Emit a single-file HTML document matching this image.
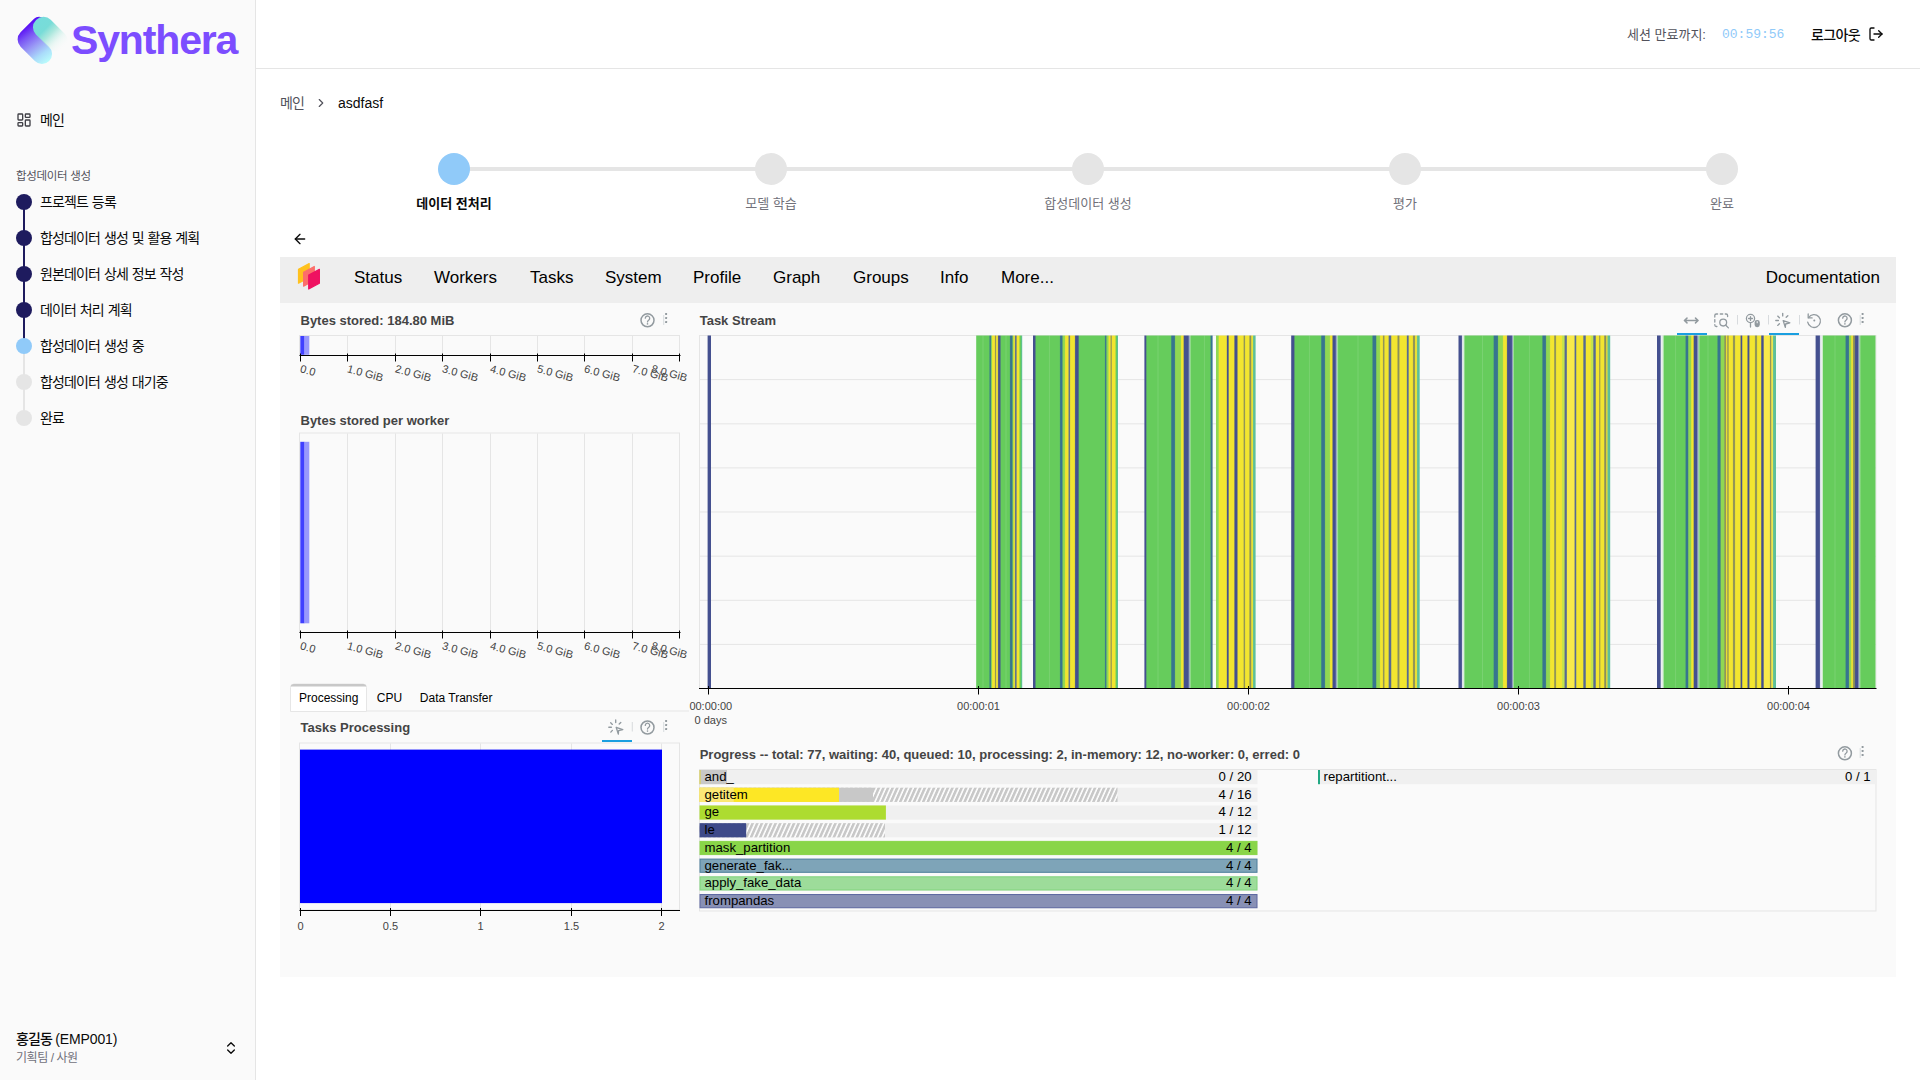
<!DOCTYPE html>
<html lang="ko"><head><meta charset="utf-8"><title>Synthera</title>
<style>
*{box-sizing:border-box;margin:0;padding:0}
html,body{width:1920px;height:1080px;overflow:hidden;background:#fff}
body{font-family:"Liberation Sans","Noto Sans CJK KR",sans-serif;color:#0a0a0a;position:relative}
.abs{position:absolute}
.t{position:absolute;white-space:nowrap;line-height:1}
.kr{font-family:"Liberation Sans","Noto Sans CJK KR",sans-serif}
#side{position:absolute;left:0;top:0;width:256px;height:1080px;background:#fafafa;border-right:1px solid #e5e5e5}
#head{position:absolute;left:256px;top:0;width:1664px;height:69px;border-bottom:1px solid #e5e5e5;background:#fff}
#panel{position:absolute;left:280px;top:257px;width:1616px;height:720px;background:#fafafa}
#nav{position:absolute;left:0;top:0;width:1616px;height:46px;background:#eee}
#nav .t{font-size:17px;color:#000;top:11px}
.bt{position:absolute;white-space:nowrap;line-height:1;font-weight:bold;font-size:13px;color:#444}
.ax{position:absolute;white-space:nowrap;line-height:1;font-size:11px;color:#444}
svg{position:absolute;overflow:visible}
</style></head><body>

<div id="side">
<svg style="left:14px;top:12px" width="56" height="56" viewBox="0 0 56 56">
<defs>
<linearGradient id="lg1" gradientUnits="userSpaceOnUse" x1="-20" y1="0" x2="20" y2="6"><stop offset="0" stop-color="#5a10f5"/><stop offset="0.22" stop-color="#7a55f4"/><stop offset="0.5" stop-color="#9a9af6"/><stop offset="0.78" stop-color="#aadcfa"/><stop offset="1" stop-color="#b8f9fb"/></linearGradient>
<linearGradient id="lg2" gradientUnits="userSpaceOnUse" x1="-18" y1="0" x2="22" y2="0"><stop offset="0" stop-color="#76dcdc"/><stop offset="0.32" stop-color="#78dcd8"/><stop offset="0.5" stop-color="#9ee4d8" stop-opacity="0.85"/><stop offset="0.75" stop-color="#dff5f0" stop-opacity="0.5"/><stop offset="1" stop-color="#fafafa" stop-opacity="0"/></linearGradient>
</defs>
<g transform="translate(28 27.5) rotate(45)">
<path d="M-20.2 10.1 V-9 a7 7 0 0 1 7 -7 H-8 V0 H10.1 a10.1 10.1 0 0 1 0 20.2 H-10.1 a10.1 10.1 0 0 1 -10.1 -10.1 Z" fill="url(#lg1)"/>
<rect x="-18" y="-20.2" width="40.4" height="20.9" rx="10.1" fill="url(#lg2)"/>
</g>
</svg>
<div class="t" style="left:71px;top:20px;font-size:41px;font-weight:bold;color:#7c4dff;letter-spacing:-1.15px;font-family:'Liberation Sans',sans-serif">Synthera</div>
<svg style="left:16px;top:112px" width="16" height="16" viewBox="0 0 24 24" fill="none" stroke="#3f3f46" stroke-width="2" stroke-linecap="round" stroke-linejoin="round"><rect x="3" y="3" width="7" height="9" rx="1"/><rect x="14" y="3" width="7" height="5" rx="1"/><rect x="14" y="12" width="7" height="9" rx="1"/><rect x="3" y="16" width="7" height="5" rx="1"/></svg>
<div class="t kr" style="left:40px;top:111px;font-size:14px;line-height:18px;font-weight:400;letter-spacing:-0.85px;color:#0a0a0a">메인</div>
<div class="t kr" style="left:16px;top:168px;font-size:11.5px;line-height:16px;letter-spacing:-0.3px;color:#52525b">합성데이터 생성</div>
<div class="abs" style="left:23px;top:202px;width:2px;height:36px;background:#1e1b5e"></div>
<div class="abs" style="left:23px;top:238px;width:2px;height:36px;background:#1e1b5e"></div>
<div class="abs" style="left:23px;top:274px;width:2px;height:36px;background:#1e1b5e"></div>
<div class="abs" style="left:23px;top:310px;width:2px;height:36px;background:#1e1b5e"></div>
<div class="abs" style="left:23px;top:346px;width:2px;height:36px;background:#e5e5e5"></div>
<div class="abs" style="left:23px;top:382px;width:2px;height:36px;background:#e5e5e5"></div>
<div class="abs" style="left:16px;top:194px;width:16px;height:16px;border-radius:50%;background:#1e1b5e"></div>
<div class="t kr" style="left:40px;top:192px;font-size:14px;line-height:20px;font-weight:400;letter-spacing:-0.85px;word-spacing:0.7px;color:#0a0a0a">프로젝트 등록</div>
<div class="abs" style="left:16px;top:230px;width:16px;height:16px;border-radius:50%;background:#1e1b5e"></div>
<div class="t kr" style="left:40px;top:228px;font-size:14px;line-height:20px;font-weight:400;letter-spacing:-0.85px;word-spacing:0.7px;color:#0a0a0a">합성데이터 생성 및 활용 계획</div>
<div class="abs" style="left:16px;top:266px;width:16px;height:16px;border-radius:50%;background:#1e1b5e"></div>
<div class="t kr" style="left:40px;top:264px;font-size:14px;line-height:20px;font-weight:400;letter-spacing:-0.85px;word-spacing:0.7px;color:#0a0a0a">원본데이터 상세 정보 작성</div>
<div class="abs" style="left:16px;top:302px;width:16px;height:16px;border-radius:50%;background:#1e1b5e"></div>
<div class="t kr" style="left:40px;top:300px;font-size:14px;line-height:20px;font-weight:400;letter-spacing:-0.85px;word-spacing:0.7px;color:#0a0a0a">데이터 처리 계획</div>
<div class="abs" style="left:16px;top:338px;width:16px;height:16px;border-radius:50%;background:#90caf9"></div>
<div class="t kr" style="left:40px;top:336px;font-size:14px;line-height:20px;font-weight:400;letter-spacing:-0.85px;word-spacing:0.7px;color:#0a0a0a">합성데이터 생성 중</div>
<div class="abs" style="left:16px;top:374px;width:16px;height:16px;border-radius:50%;background:#e5e5e5"></div>
<div class="t kr" style="left:40px;top:372px;font-size:14px;line-height:20px;font-weight:400;letter-spacing:-0.85px;word-spacing:0.7px;color:#0a0a0a">합성데이터 생성 대기중</div>
<div class="abs" style="left:16px;top:410px;width:16px;height:16px;border-radius:50%;background:#e5e5e5"></div>
<div class="t kr" style="left:40px;top:408px;font-size:14px;line-height:20px;font-weight:400;letter-spacing:-0.85px;word-spacing:0.7px;color:#0a0a0a">완료</div>
<div class="t kr" style="left:16px;top:1029px;font-size:14px;line-height:20px;font-weight:500;color:#0a0a0a"><span style="letter-spacing:-0.85px">홍길동 </span><span style="letter-spacing:-0.1px">(EMP001)</span></div>
<div class="t kr" style="left:16px;top:1050px;font-size:12px;line-height:16px;letter-spacing:-0.45px;color:#71717a">기획팀 / 사원</div>
<svg style="left:223px;top:1040px" width="16" height="16" viewBox="0 0 24 24" fill="none" stroke="#0a0a0a" stroke-width="2" stroke-linecap="round" stroke-linejoin="round"><path d="m7 15 5 5 5-5"/><path d="m7 9 5-5 5 5"/></svg>
</div>
<div id="head">
<div class="t kr" style="left:1371px;top:25px;font-size:13px;line-height:20px;color:#52525b">세션 만료까지:</div>
<div class="t" style="left:1466px;top:25px;font-size:13px;line-height:20px;color:#90caf9;font-family:'Liberation Mono','DejaVu Sans Mono',monospace">00:59:56</div>
<div class="t kr" style="left:1555px;top:25px;font-size:14px;line-height:20px;color:#0a0a0a;font-weight:500;letter-spacing:-0.6px">로그아웃</div>
<svg style="left:1612px;top:26px" width="16" height="16" viewBox="0 0 24 24" fill="none" stroke="#0a0a0a" stroke-width="2" stroke-linecap="round" stroke-linejoin="round"><path d="M9 21H5a2 2 0 0 1-2-2V5a2 2 0 0 1 2-2h4"/><polyline points="16 17 21 12 16 7"/><line x1="21" x2="9" y1="12" y2="12"/></svg>
</div>
<div class="t kr" style="left:280px;top:93px;font-size:14px;line-height:20px;letter-spacing:-0.85px;color:#52525b">메인</div>
<svg style="left:314px;top:96px" width="14" height="14" viewBox="0 0 24 24" fill="none" stroke="#52525b" stroke-width="2" stroke-linecap="round" stroke-linejoin="round"><path d="m9 18 6-6-6-6"/></svg>
<div class="t" style="left:338px;top:93px;font-size:14px;line-height:20px;color:#0a0a0a">asdfasf</div>
<div class="abs" style="left:454px;top:167px;width:1268px;height:4px;background:#e5e5e5"></div>
<div class="abs" style="left:438px;top:153px;width:32px;height:32px;border-radius:50%;background:#90caf9"></div>
<div class="t kr" style="left:354px;width:200px;text-align:center;top:194px;font-size:13px;line-height:20px;font-weight:bold;color:#0a0a0a">데이터 전처리</div>
<div class="abs" style="left:755px;top:153px;width:32px;height:32px;border-radius:50%;background:#e5e5e5"></div>
<div class="t kr" style="left:671px;width:200px;text-align:center;top:194px;font-size:13px;line-height:20px;color:#71717a">모델 학습</div>
<div class="abs" style="left:1072px;top:153px;width:32px;height:32px;border-radius:50%;background:#e5e5e5"></div>
<div class="t kr" style="left:988px;width:200px;text-align:center;top:194px;font-size:13px;line-height:20px;color:#71717a">합성데이터 생성</div>
<div class="abs" style="left:1389px;top:153px;width:32px;height:32px;border-radius:50%;background:#e5e5e5"></div>
<div class="t kr" style="left:1305px;width:200px;text-align:center;top:194px;font-size:13px;line-height:20px;color:#71717a">평가</div>
<div class="abs" style="left:1706px;top:153px;width:32px;height:32px;border-radius:50%;background:#e5e5e5"></div>
<div class="t kr" style="left:1622px;width:200px;text-align:center;top:194px;font-size:13px;line-height:20px;color:#71717a">완료</div>
<svg style="left:292px;top:231px" width="16" height="16" viewBox="0 0 24 24" fill="none" stroke="#0a0a0a" stroke-width="2" stroke-linecap="round" stroke-linejoin="round"><path d="m12 19-7-7 7-7"/><path d="M19 12H5"/></svg>
<div id="panel">
<div id="nav">
<svg style="left:0;top:0" width="60" height="46" viewBox="280 257 60 46">
<g stroke-width="1.2" stroke-linejoin="round">
<path d="M298.5 269.3 L309.2 263.6 V277.4 L298.5 283.2 Z" fill="#ffc11e" stroke="#ffc11e"/>
<path d="M303.6 272.2 L314.3 266.5 V280.3 L303.6 286.1 Z" fill="#fc6e6b" stroke="#fc6e6b"/>
<path d="M308.7 275.1 L319.4 269.4 V283.2 L308.7 289 Z" fill="#ef1161" stroke="#ef1161"/>
</g></svg>
<div class="t" style="left:74px;line-height:20px">Status</div>
<div class="t" style="left:154px;line-height:20px">Workers</div>
<div class="t" style="left:250px;line-height:20px">Tasks</div>
<div class="t" style="left:325px;line-height:20px">System</div>
<div class="t" style="left:413px;line-height:20px">Profile</div>
<div class="t" style="left:493px;line-height:20px">Graph</div>
<div class="t" style="left:573px;line-height:20px">Groups</div>
<div class="t" style="left:660px;line-height:20px">Info</div>
<div class="t" style="left:721px;line-height:20px">More...</div>
<div class="t" style="right:16px;line-height:20px">Documentation</div>
</div>
<svg style="left:-280px;top:-257px" width="1920" height="1080" viewBox="0 0 1920 1080" font-family="Liberation Sans, sans-serif">
<text x="300.5" y="324.6" font-size="13" font-weight="bold" fill="#444">Bytes stored: 184.80 MiB</text>
<g fill="none" stroke="#929a9f" stroke-width="1.5" stroke-linecap="round"><circle cx="647.5" cy="320.3" r="6.5"/><path stroke-width="1.3" d="M645.3 318.2 a2.2 2.2 0 1 1 3.5 1.8 c-0.9 0.6 -1.3 0.9 -1.3 1.9"/></g><circle cx="647.5" cy="323.90000000000003" r="0.8" fill="#929a9f"/>
<line x1="663.6999999999999" y1="315" x2="663.6999999999999" y2="325" stroke="#c9ced3" stroke-width="0.7"/>
<rect x="665.0999999999999" y="312.9" width="2" height="2" rx="0.4" fill="#929a9f"/>
<rect x="665.0999999999999" y="317.0" width="2" height="2" rx="0.4" fill="#929a9f"/>
<rect x="665.0999999999999" y="321.1" width="2" height="2" rx="0.4" fill="#929a9f"/>
<rect x="299.5" y="335.5" width="380" height="20.0" fill="#fafafa" stroke="#e5e5e5" stroke-width="1"/>
<line x1="347.5" y1="336" x2="347.5" y2="355.5" stroke="#e5e5e5" stroke-width="1"/>
<line x1="395.5" y1="336" x2="395.5" y2="355.5" stroke="#e5e5e5" stroke-width="1"/>
<line x1="442.5" y1="336" x2="442.5" y2="355.5" stroke="#e5e5e5" stroke-width="1"/>
<line x1="490.5" y1="336" x2="490.5" y2="355.5" stroke="#e5e5e5" stroke-width="1"/>
<line x1="537.5" y1="336" x2="537.5" y2="355.5" stroke="#e5e5e5" stroke-width="1"/>
<line x1="584.5" y1="336" x2="584.5" y2="355.5" stroke="#e5e5e5" stroke-width="1"/>
<line x1="632.5" y1="336" x2="632.5" y2="355.5" stroke="#e5e5e5" stroke-width="1"/>
<rect x="300.3" y="336" width="4.3" height="18.80000000000001" fill="#4040ff"/>
<rect x="304.6" y="336" width="4.7" height="18.80000000000001" fill="#9898fc"/>
<line x1="299.5" y1="355.5" x2="680.5" y2="355.5" stroke="#000" stroke-width="1"/>
<line x1="300.5" y1="353.5" x2="300.5" y2="361.5" stroke="#000" stroke-width="1"/>
<line x1="347.5" y1="353.5" x2="347.5" y2="361.5" stroke="#000" stroke-width="1"/>
<line x1="395.5" y1="353.5" x2="395.5" y2="361.5" stroke="#000" stroke-width="1"/>
<line x1="442.5" y1="353.5" x2="442.5" y2="361.5" stroke="#000" stroke-width="1"/>
<line x1="490.5" y1="353.5" x2="490.5" y2="361.5" stroke="#000" stroke-width="1"/>
<line x1="537.5" y1="353.5" x2="537.5" y2="361.5" stroke="#000" stroke-width="1"/>
<line x1="584.5" y1="353.5" x2="584.5" y2="361.5" stroke="#000" stroke-width="1"/>
<line x1="632.5" y1="353.5" x2="632.5" y2="361.5" stroke="#000" stroke-width="1"/>
<line x1="679.5" y1="353.5" x2="679.5" y2="361.5" stroke="#000" stroke-width="1"/>
<text font-size="11" fill="#444" transform="translate(301.8 363.8) rotate(15)" y="8.6">0.0</text>
<text font-size="11" fill="#444" transform="translate(348.8 363.8) rotate(15)" y="8.6">1.0 GiB</text>
<text font-size="11" fill="#444" transform="translate(396.8 363.8) rotate(15)" y="8.6">2.0 GiB</text>
<text font-size="11" fill="#444" transform="translate(443.8 363.8) rotate(15)" y="8.6">3.0 GiB</text>
<text font-size="11" fill="#444" transform="translate(491.8 363.8) rotate(15)" y="8.6">4.0 GiB</text>
<text font-size="11" fill="#444" transform="translate(538.8 363.8) rotate(15)" y="8.6">5.0 GiB</text>
<text font-size="11" fill="#444" transform="translate(585.8 363.8) rotate(15)" y="8.6">6.0 GiB</text>
<text font-size="11" fill="#444" transform="translate(633.8 363.8) rotate(15)" y="8.6">7.0 GiB</text>
<text font-size="11" fill="#444" transform="translate(653.0 363.8) rotate(15)" y="8.6">8.0 GiB</text>
<text x="300.5" y="424.6" font-size="13" font-weight="bold" fill="#444">Bytes stored per worker</text>
<rect x="299.5" y="433.0" width="380" height="199.5" fill="#fafafa" stroke="#e5e5e5" stroke-width="1"/>
<line x1="347.5" y1="433.5" x2="347.5" y2="632.5" stroke="#e5e5e5" stroke-width="1"/>
<line x1="395.5" y1="433.5" x2="395.5" y2="632.5" stroke="#e5e5e5" stroke-width="1"/>
<line x1="442.5" y1="433.5" x2="442.5" y2="632.5" stroke="#e5e5e5" stroke-width="1"/>
<line x1="490.5" y1="433.5" x2="490.5" y2="632.5" stroke="#e5e5e5" stroke-width="1"/>
<line x1="537.5" y1="433.5" x2="537.5" y2="632.5" stroke="#e5e5e5" stroke-width="1"/>
<line x1="584.5" y1="433.5" x2="584.5" y2="632.5" stroke="#e5e5e5" stroke-width="1"/>
<line x1="632.5" y1="433.5" x2="632.5" y2="632.5" stroke="#e5e5e5" stroke-width="1"/>
<rect x="300.3" y="441.8" width="4.3" height="181.49999999999994" fill="#4040ff"/>
<rect x="304.6" y="441.8" width="4.7" height="181.49999999999994" fill="#9898fc"/>
<line x1="299.5" y1="632.5" x2="680.5" y2="632.5" stroke="#000" stroke-width="1"/>
<line x1="300.5" y1="630.5" x2="300.5" y2="638.5" stroke="#000" stroke-width="1"/>
<line x1="347.5" y1="630.5" x2="347.5" y2="638.5" stroke="#000" stroke-width="1"/>
<line x1="395.5" y1="630.5" x2="395.5" y2="638.5" stroke="#000" stroke-width="1"/>
<line x1="442.5" y1="630.5" x2="442.5" y2="638.5" stroke="#000" stroke-width="1"/>
<line x1="490.5" y1="630.5" x2="490.5" y2="638.5" stroke="#000" stroke-width="1"/>
<line x1="537.5" y1="630.5" x2="537.5" y2="638.5" stroke="#000" stroke-width="1"/>
<line x1="584.5" y1="630.5" x2="584.5" y2="638.5" stroke="#000" stroke-width="1"/>
<line x1="632.5" y1="630.5" x2="632.5" y2="638.5" stroke="#000" stroke-width="1"/>
<line x1="679.5" y1="630.5" x2="679.5" y2="638.5" stroke="#000" stroke-width="1"/>
<text font-size="11" fill="#444" transform="translate(301.8 640.8) rotate(15)" y="8.6">0.0</text>
<text font-size="11" fill="#444" transform="translate(348.8 640.8) rotate(15)" y="8.6">1.0 GiB</text>
<text font-size="11" fill="#444" transform="translate(396.8 640.8) rotate(15)" y="8.6">2.0 GiB</text>
<text font-size="11" fill="#444" transform="translate(443.8 640.8) rotate(15)" y="8.6">3.0 GiB</text>
<text font-size="11" fill="#444" transform="translate(491.8 640.8) rotate(15)" y="8.6">4.0 GiB</text>
<text font-size="11" fill="#444" transform="translate(538.8 640.8) rotate(15)" y="8.6">5.0 GiB</text>
<text font-size="11" fill="#444" transform="translate(585.8 640.8) rotate(15)" y="8.6">6.0 GiB</text>
<text font-size="11" fill="#444" transform="translate(633.8 640.8) rotate(15)" y="8.6">7.0 GiB</text>
<text font-size="11" fill="#444" transform="translate(653.0 640.8) rotate(15)" y="8.6">8.0 GiB</text>
<line x1="290" y1="711" x2="689" y2="711" stroke="#e6e6e6" stroke-width="1"/>
<path d="M290.5 711.5 V687.5 a3.5 3.5 0 0 1 3.5 -3.5 H363 a3.5 3.5 0 0 1 3.5 3.5 V711.5 Z" fill="#fff" stroke="#e6e6e6" stroke-width="1"/>
<path d="M290.6 686.6 a3 3 0 0 1 3 -2.6 H363.4 a3 3 0 0 1 3 2.6 Z" fill="#c8c8c8"/>
<text x="299" y="702" font-size="12" fill="#000">Processing</text>
<text x="376.8" y="702" font-size="12" fill="#000">CPU</text>
<text x="419.8" y="702" font-size="12" fill="#000">Data Transfer</text>
<text x="300.5" y="731.9" font-size="13" font-weight="bold" fill="#444">Tasks Processing</text>
<g fill="none" stroke="#929a9f" stroke-width="1.35" stroke-linecap="round" stroke-linejoin="round"><path d="M616.2 727.3 l6.6 2.3 l-4.2 1.1 l-0.3 3.4 z"/><path d="M615.7 722.6 v-2.6 M612.4 724.4 l-1.7 -1.6 M619.2 724 l1.6 -1.6 M611.4 727.2 h-2.6 M612.4 730.4 l-1.6 1.7"/></g>
<rect x="602" y="740" width="30" height="2" fill="#1a9fe0"/>
<line x1="632.3" y1="722.0" x2="632.3" y2="731.5" stroke="#cfd3d7" stroke-width="0.8"/>
<g fill="none" stroke="#929a9f" stroke-width="1.5" stroke-linecap="round"><circle cx="647.5" cy="727.5" r="6.5"/><path stroke-width="1.3" d="M645.3 725.4 a2.2 2.2 0 1 1 3.5 1.8 c-0.9 0.6 -1.3 0.9 -1.3 1.9"/></g><circle cx="647.5" cy="731.1" r="0.8" fill="#929a9f"/>
<line x1="663.6999999999999" y1="722" x2="663.6999999999999" y2="732" stroke="#c9ced3" stroke-width="0.7"/>
<rect x="665.0999999999999" y="719.9" width="2" height="2" rx="0.4" fill="#929a9f"/>
<rect x="665.0999999999999" y="724.0" width="2" height="2" rx="0.4" fill="#929a9f"/>
<rect x="665.0999999999999" y="728.1" width="2" height="2" rx="0.4" fill="#929a9f"/>
<rect x="299.5" y="743" width="380" height="167" fill="#fafafa" stroke="#e5e5e5" stroke-width="1"/>
<line x1="390.5" y1="743.5" x2="390.5" y2="910" stroke="#e5e5e5" stroke-width="1"/>
<line x1="480.5" y1="743.5" x2="480.5" y2="910" stroke="#e5e5e5" stroke-width="1"/>
<line x1="571.5" y1="743.5" x2="571.5" y2="910" stroke="#e5e5e5" stroke-width="1"/>
<line x1="661.5" y1="743.5" x2="661.5" y2="910" stroke="#e5e5e5" stroke-width="1"/>
<rect x="300" y="749.6" width="362" height="153.5" fill="#0000ff"/>
<line x1="299.5" y1="910.5" x2="680" y2="910.5" stroke="#000" stroke-width="1"/>
<line x1="300.5" y1="908" x2="300.5" y2="916" stroke="#000" stroke-width="1"/>
<text x="300.5" y="930" font-size="11" fill="#444" text-anchor="middle">0</text>
<line x1="390.5" y1="908" x2="390.5" y2="916" stroke="#000" stroke-width="1"/>
<text x="390.5" y="930" font-size="11" fill="#444" text-anchor="middle">0.5</text>
<line x1="480.5" y1="908" x2="480.5" y2="916" stroke="#000" stroke-width="1"/>
<text x="480.5" y="930" font-size="11" fill="#444" text-anchor="middle">1</text>
<line x1="571.5" y1="908" x2="571.5" y2="916" stroke="#000" stroke-width="1"/>
<text x="571.5" y="930" font-size="11" fill="#444" text-anchor="middle">1.5</text>
<line x1="661.5" y1="908" x2="661.5" y2="916" stroke="#000" stroke-width="1"/>
<text x="661.5" y="930" font-size="11" fill="#444" text-anchor="middle">2</text>
<text x="699.7" y="324.6" font-size="13" font-weight="bold" fill="#444">Task Stream</text>
<rect x="699.5" y="335.5" width="1176.5" height="353" fill="#fafafa" stroke="#e5e5e5" stroke-width="1"/>
<line x1="700" y1="379.6" x2="1876" y2="379.6" stroke="#e5e5e5" stroke-width="1"/>
<line x1="700" y1="423.8" x2="1876" y2="423.8" stroke="#e5e5e5" stroke-width="1"/>
<line x1="700" y1="467.9" x2="1876" y2="467.9" stroke="#e5e5e5" stroke-width="1"/>
<line x1="700" y1="512.0" x2="1876" y2="512.0" stroke="#e5e5e5" stroke-width="1"/>
<line x1="700" y1="556.2" x2="1876" y2="556.2" stroke="#e5e5e5" stroke-width="1"/>
<line x1="700" y1="600.3" x2="1876" y2="600.3" stroke="#e5e5e5" stroke-width="1"/>
<line x1="700" y1="644.4" x2="1876" y2="644.4" stroke="#e5e5e5" stroke-width="1"/>
<defs><linearGradient id="tsg" gradientUnits="userSpaceOnUse" x1="700.0" y1="0" x2="1880.0" y2="0"><stop offset="0.00602" stop-color="#44508f"/><stop offset="0.00975" stop-color="#44508f"/><stop offset="0.23364" stop-color="#66cc5c"/><stop offset="0.24483" stop-color="#66cc5c"/><stop offset="0.24585" stop-color="#37758f"/><stop offset="0.24610" stop-color="#37758f"/><stop offset="0.24712" stop-color="#90d752"/><stop offset="0.24695" stop-color="#90d752"/><stop offset="0.24797" stop-color="#f2e530"/><stop offset="0.24949" stop-color="#f2e530"/><stop offset="0.25051" stop-color="#8a8f5a"/><stop offset="0.25034" stop-color="#8a8f5a"/><stop offset="0.25136" stop-color="#f2e530"/><stop offset="0.25203" stop-color="#f2e530"/><stop offset="0.25305" stop-color="#44508f"/><stop offset="0.25415" stop-color="#44508f"/><stop offset="0.25517" stop-color="#66cc5c"/><stop offset="0.26220" stop-color="#66cc5c"/><stop offset="0.26322" stop-color="#37758f"/><stop offset="0.26432" stop-color="#37758f"/><stop offset="0.26534" stop-color="#90d752"/><stop offset="0.26500" stop-color="#90d752"/><stop offset="0.26602" stop-color="#f2e530"/><stop offset="0.26644" stop-color="#f2e530"/><stop offset="0.26746" stop-color="#566a94"/><stop offset="0.26780" stop-color="#566a94"/><stop offset="0.26881" stop-color="#f2e530"/><stop offset="0.27025" stop-color="#f2e530"/><stop offset="0.27127" stop-color="#66cc5c"/><stop offset="0.27169" stop-color="#66cc5c"/><stop offset="0.27271" stop-color="#5cbf9a"/><stop offset="0.27347" stop-color="#5cbf9a"/><stop offset="0.28178" stop-color="#44508f"/><stop offset="0.28381" stop-color="#44508f"/><stop offset="0.28483" stop-color="#66cc5c"/><stop offset="0.30458" stop-color="#66cc5c"/><stop offset="0.30559" stop-color="#37758f"/><stop offset="0.30669" stop-color="#37758f"/><stop offset="0.30771" stop-color="#90d752"/><stop offset="0.30881" stop-color="#90d752"/><stop offset="0.30983" stop-color="#f2e530"/><stop offset="0.31186" stop-color="#f2e530"/><stop offset="0.31288" stop-color="#566a94"/><stop offset="0.31305" stop-color="#566a94"/><stop offset="0.31407" stop-color="#f2e530"/><stop offset="0.31729" stop-color="#f2e530"/><stop offset="0.31831" stop-color="#44508f"/><stop offset="0.32042" stop-color="#44508f"/><stop offset="0.32144" stop-color="#66cc5c"/><stop offset="0.34271" stop-color="#66cc5c"/><stop offset="0.34373" stop-color="#37758f"/><stop offset="0.34390" stop-color="#37758f"/><stop offset="0.34492" stop-color="#90d752"/><stop offset="0.34568" stop-color="#90d752"/><stop offset="0.34669" stop-color="#f2e530"/><stop offset="0.34746" stop-color="#f2e530"/><stop offset="0.34847" stop-color="#8a8f5a"/><stop offset="0.34847" stop-color="#8a8f5a"/><stop offset="0.34949" stop-color="#f2e530"/><stop offset="0.35169" stop-color="#f2e530"/><stop offset="0.35271" stop-color="#66cc5c"/><stop offset="0.35288" stop-color="#66cc5c"/><stop offset="0.35390" stop-color="#5cbf9a"/><stop offset="0.35466" stop-color="#5cbf9a"/><stop offset="0.37619" stop-color="#44508f"/><stop offset="0.37771" stop-color="#44508f"/><stop offset="0.37873" stop-color="#66cc5c"/><stop offset="0.39881" stop-color="#66cc5c"/><stop offset="0.39983" stop-color="#37758f"/><stop offset="0.40203" stop-color="#37758f"/><stop offset="0.40305" stop-color="#90d752"/><stop offset="0.40712" stop-color="#90d752"/><stop offset="0.40814" stop-color="#f2e530"/><stop offset="0.40941" stop-color="#f2e530"/><stop offset="0.41042" stop-color="#44508f"/><stop offset="0.41364" stop-color="#44508f"/><stop offset="0.41466" stop-color="#98a3c4"/><stop offset="0.41437" stop-color="#98a3c4"/><stop offset="0.41539" stop-color="#a6e0a2"/><stop offset="0.41525" stop-color="#a6e0a2"/><stop offset="0.41627" stop-color="#66cc5c"/><stop offset="0.43220" stop-color="#66cc5c"/><stop offset="0.43322" stop-color="#37758f"/><stop offset="0.43483" stop-color="#37758f"/><stop offset="0.43686" stop-color="#90d752"/><stop offset="0.43907" stop-color="#90d752"/><stop offset="0.44008" stop-color="#f2e530"/><stop offset="0.44602" stop-color="#f2e530"/><stop offset="0.44703" stop-color="#44508f"/><stop offset="0.44754" stop-color="#44508f"/><stop offset="0.44856" stop-color="#f2e530"/><stop offset="0.45237" stop-color="#f2e530"/><stop offset="0.45339" stop-color="#44508f"/><stop offset="0.45500" stop-color="#44508f"/><stop offset="0.45602" stop-color="#f2e530"/><stop offset="0.46025" stop-color="#f2e530"/><stop offset="0.46127" stop-color="#8a8f5a"/><stop offset="0.46136" stop-color="#8a8f5a"/><stop offset="0.46237" stop-color="#f2e530"/><stop offset="0.46508" stop-color="#f2e530"/><stop offset="0.46610" stop-color="#8a8f5a"/><stop offset="0.46661" stop-color="#8a8f5a"/><stop offset="0.46763" stop-color="#f2e530"/><stop offset="0.46814" stop-color="#f2e530"/><stop offset="0.46915" stop-color="#5cbf9a"/><stop offset="0.47127" stop-color="#5cbf9a"/><stop offset="0.50059" stop-color="#44508f"/><stop offset="0.50322" stop-color="#44508f"/><stop offset="0.50424" stop-color="#66cc5c"/><stop offset="0.52593" stop-color="#66cc5c"/><stop offset="0.52695" stop-color="#37758f"/><stop offset="0.52915" stop-color="#37758f"/><stop offset="0.53017" stop-color="#90d752"/><stop offset="0.53339" stop-color="#90d752"/><stop offset="0.53441" stop-color="#f2e530"/><stop offset="0.53551" stop-color="#f2e530"/><stop offset="0.53653" stop-color="#44508f"/><stop offset="0.53831" stop-color="#44508f"/><stop offset="0.53932" stop-color="#98a3c4"/><stop offset="0.53914" stop-color="#98a3c4"/><stop offset="0.54016" stop-color="#a6e0a2"/><stop offset="0.54017" stop-color="#a6e0a2"/><stop offset="0.54119" stop-color="#66cc5c"/><stop offset="0.56941" stop-color="#66cc5c"/><stop offset="0.57042" stop-color="#37758f"/><stop offset="0.57254" stop-color="#37758f"/><stop offset="0.57356" stop-color="#90d752"/><stop offset="0.57576" stop-color="#90d752"/><stop offset="0.57678" stop-color="#f2e530"/><stop offset="0.57831" stop-color="#f2e530"/><stop offset="0.57932" stop-color="#8a8f5a"/><stop offset="0.57949" stop-color="#8a8f5a"/><stop offset="0.58051" stop-color="#f2e530"/><stop offset="0.58314" stop-color="#f2e530"/><stop offset="0.58415" stop-color="#566a94"/><stop offset="0.58525" stop-color="#566a94"/><stop offset="0.58627" stop-color="#f2e530"/><stop offset="0.59059" stop-color="#f2e530"/><stop offset="0.59161" stop-color="#8a8f5a"/><stop offset="0.59220" stop-color="#8a8f5a"/><stop offset="0.59322" stop-color="#f2e530"/><stop offset="0.59856" stop-color="#f2e530"/><stop offset="0.59958" stop-color="#566a94"/><stop offset="0.60008" stop-color="#566a94"/><stop offset="0.60110" stop-color="#f2e530"/><stop offset="0.60373" stop-color="#f2e530"/><stop offset="0.60475" stop-color="#8a8f5a"/><stop offset="0.60542" stop-color="#8a8f5a"/><stop offset="0.60644" stop-color="#f2e530"/><stop offset="0.60712" stop-color="#f2e530"/><stop offset="0.60814" stop-color="#5cbf9a"/><stop offset="0.61034" stop-color="#5cbf9a"/><stop offset="0.64237" stop-color="#44508f"/><stop offset="0.64525" stop-color="#44508f"/><stop offset="0.64627" stop-color="#eceef4"/><stop offset="0.64656" stop-color="#eceef4"/><stop offset="0.64758" stop-color="#c9ecc6"/><stop offset="0.64712" stop-color="#c9ecc6"/><stop offset="0.64814" stop-color="#66cc5c"/><stop offset="0.67212" stop-color="#66cc5c"/><stop offset="0.67314" stop-color="#37758f"/><stop offset="0.67576" stop-color="#37758f"/><stop offset="0.67678" stop-color="#90d752"/><stop offset="0.68000" stop-color="#90d752"/><stop offset="0.68102" stop-color="#f2e530"/><stop offset="0.68339" stop-color="#f2e530"/><stop offset="0.68441" stop-color="#44508f"/><stop offset="0.68763" stop-color="#44508f"/><stop offset="0.68864" stop-color="#98a3c4"/><stop offset="0.68828" stop-color="#98a3c4"/><stop offset="0.68930" stop-color="#a6e0a2"/><stop offset="0.68907" stop-color="#a6e0a2"/><stop offset="0.69008" stop-color="#66cc5c"/><stop offset="0.71339" stop-color="#66cc5c"/><stop offset="0.71441" stop-color="#37758f"/><stop offset="0.71644" stop-color="#37758f"/><stop offset="0.71746" stop-color="#90d752"/><stop offset="0.71983" stop-color="#90d752"/><stop offset="0.72085" stop-color="#f2e530"/><stop offset="0.72339" stop-color="#f2e530"/><stop offset="0.72441" stop-color="#8a8f5a"/><stop offset="0.72492" stop-color="#8a8f5a"/><stop offset="0.72593" stop-color="#f2e530"/><stop offset="0.73000" stop-color="#f2e530"/><stop offset="0.73102" stop-color="#c5e34a"/><stop offset="0.73220" stop-color="#c5e34a"/><stop offset="0.73322" stop-color="#566a94"/><stop offset="0.73415" stop-color="#566a94"/><stop offset="0.73517" stop-color="#f8ea4a"/><stop offset="0.74068" stop-color="#f8ea4a"/><stop offset="0.74169" stop-color="#566a94"/><stop offset="0.74203" stop-color="#566a94"/><stop offset="0.74305" stop-color="#f2e530"/><stop offset="0.74805" stop-color="#f2e530"/><stop offset="0.74907" stop-color="#566a94"/><stop offset="0.75017" stop-color="#566a94"/><stop offset="0.75119" stop-color="#f2e530"/><stop offset="0.75441" stop-color="#f2e530"/><stop offset="0.75542" stop-color="#c5e34a"/><stop offset="0.75653" stop-color="#c5e34a"/><stop offset="0.75754" stop-color="#566a94"/><stop offset="0.75864" stop-color="#566a94"/><stop offset="0.75966" stop-color="#f2e530"/><stop offset="0.76153" stop-color="#f2e530"/><stop offset="0.76254" stop-color="#8a8f5a"/><stop offset="0.76237" stop-color="#8a8f5a"/><stop offset="0.76339" stop-color="#f2e530"/><stop offset="0.76576" stop-color="#f2e530"/><stop offset="0.76678" stop-color="#8a8f5a"/><stop offset="0.76746" stop-color="#8a8f5a"/><stop offset="0.76847" stop-color="#f2e530"/><stop offset="0.76856" stop-color="#f2e530"/><stop offset="0.76958" stop-color="#5cbf9a"/><stop offset="0.77178" stop-color="#5cbf9a"/><stop offset="0.81059" stop-color="#44508f"/><stop offset="0.81364" stop-color="#44508f"/><stop offset="0.81466" stop-color="#eceef4"/><stop offset="0.81531" stop-color="#eceef4"/><stop offset="0.81632" stop-color="#c9ecc6"/><stop offset="0.81602" stop-color="#c9ecc6"/><stop offset="0.81703" stop-color="#66cc5c"/><stop offset="0.83475" stop-color="#66cc5c"/><stop offset="0.83576" stop-color="#37758f"/><stop offset="0.83695" stop-color="#37758f"/><stop offset="0.83797" stop-color="#90d752"/><stop offset="0.83949" stop-color="#90d752"/><stop offset="0.84051" stop-color="#f2e530"/><stop offset="0.84161" stop-color="#f2e530"/><stop offset="0.84263" stop-color="#44508f"/><stop offset="0.84458" stop-color="#44508f"/><stop offset="0.84559" stop-color="#98a3c4"/><stop offset="0.84549" stop-color="#98a3c4"/><stop offset="0.84651" stop-color="#a6e0a2"/><stop offset="0.84661" stop-color="#a6e0a2"/><stop offset="0.84763" stop-color="#66cc5c"/><stop offset="0.86178" stop-color="#66cc5c"/><stop offset="0.86280" stop-color="#37758f"/><stop offset="0.86441" stop-color="#37758f"/><stop offset="0.86542" stop-color="#90d752"/><stop offset="0.86763" stop-color="#90d752"/><stop offset="0.86864" stop-color="#8a8f5a"/><stop offset="0.86898" stop-color="#8a8f5a"/><stop offset="0.87000" stop-color="#f2e530"/><stop offset="0.87008" stop-color="#f2e530"/><stop offset="0.87110" stop-color="#8a8f5a"/><stop offset="0.87119" stop-color="#8a8f5a"/><stop offset="0.87220" stop-color="#f2e530"/><stop offset="0.87492" stop-color="#f2e530"/><stop offset="0.87593" stop-color="#8a8f5a"/><stop offset="0.87661" stop-color="#8a8f5a"/><stop offset="0.87763" stop-color="#f2e530"/><stop offset="0.88136" stop-color="#f2e530"/><stop offset="0.88237" stop-color="#44508f"/><stop offset="0.88271" stop-color="#44508f"/><stop offset="0.88373" stop-color="#f2e530"/><stop offset="0.88720" stop-color="#f2e530"/><stop offset="0.88822" stop-color="#44508f"/><stop offset="0.88881" stop-color="#44508f"/><stop offset="0.88983" stop-color="#f2e530"/><stop offset="0.89356" stop-color="#f2e530"/><stop offset="0.89458" stop-color="#8a8f5a"/><stop offset="0.89525" stop-color="#8a8f5a"/><stop offset="0.89627" stop-color="#f2e530"/><stop offset="0.89881" stop-color="#f2e530"/><stop offset="0.89983" stop-color="#44508f"/><stop offset="0.90093" stop-color="#44508f"/><stop offset="0.90195" stop-color="#f8ea4a"/><stop offset="0.90627" stop-color="#f8ea4a"/><stop offset="0.90729" stop-color="#8a8f5a"/><stop offset="0.90729" stop-color="#8a8f5a"/><stop offset="0.90831" stop-color="#f8ea4a"/><stop offset="0.90881" stop-color="#f8ea4a"/><stop offset="0.90983" stop-color="#5cbf9a"/><stop offset="0.91229" stop-color="#5cbf9a"/><stop offset="0.94500" stop-color="#44508f"/><stop offset="0.94864" stop-color="#44508f"/><stop offset="0.94966" stop-color="#eceef4"/><stop offset="0.95031" stop-color="#eceef4"/><stop offset="0.95132" stop-color="#c9ecc6"/><stop offset="0.95102" stop-color="#c9ecc6"/><stop offset="0.95203" stop-color="#66cc5c"/><stop offset="0.97034" stop-color="#66cc5c"/><stop offset="0.97136" stop-color="#37758f"/><stop offset="0.97322" stop-color="#37758f"/><stop offset="0.97424" stop-color="#90d752"/><stop offset="0.97508" stop-color="#90d752"/><stop offset="0.97610" stop-color="#f2e530"/><stop offset="0.97661" stop-color="#f2e530"/><stop offset="0.97763" stop-color="#8a8f5a"/><stop offset="0.97831" stop-color="#8a8f5a"/><stop offset="0.97932" stop-color="#44508f"/><stop offset="0.98102" stop-color="#44508f"/><stop offset="0.98203" stop-color="#98a3c4"/><stop offset="0.98186" stop-color="#98a3c4"/><stop offset="0.98287" stop-color="#a6e0a2"/><stop offset="0.98288" stop-color="#a6e0a2"/><stop offset="0.98390" stop-color="#66cc5c"/><stop offset="0.99661" stop-color="#66cc5c"/></linearGradient></defs>
<rect x="707.6" y="335.5" width="3.4" height="352.5" fill="url(#tsg)"/>
<rect x="976.2" y="335.5" width="46.0" height="352.5" fill="url(#tsg)"/>
<rect x="1033.0" y="335.5" width="85.0" height="352.5" fill="url(#tsg)"/>
<rect x="1144.4" y="335.5" width="68.2" height="352.5" fill="url(#tsg)"/>
<rect x="1216.0" y="335.5" width="39.6" height="352.5" fill="url(#tsg)"/>
<rect x="1291.2" y="335.5" width="128.5" height="352.5" fill="url(#tsg)"/>
<rect x="1458.5" y="335.5" width="151.7" height="352.5" fill="url(#tsg)"/>
<rect x="1657.0" y="335.5" width="119.0" height="352.5" fill="url(#tsg)"/>
<rect x="1815.6" y="335.5" width="59.9" height="352.5" fill="url(#tsg)"/>
<rect x="982.5" y="335.5" width="1" height="352.5" fill="#fff" fill-opacity="0.13"/>
<rect x="1005.5" y="335.5" width="1" height="352.5" fill="#fff" fill-opacity="0.13"/>
<rect x="1048.9" y="335.5" width="1" height="352.5" fill="#fff" fill-opacity="0.13"/>
<rect x="1157.5" y="335.5" width="1" height="352.5" fill="#fff" fill-opacity="0.13"/>
<rect x="1203.9" y="335.5" width="1" height="352.5" fill="#fff" fill-opacity="0.13"/>
<rect x="1308.9" y="335.5" width="1" height="352.5" fill="#fff" fill-opacity="0.13"/>
<rect x="1357.5" y="335.5" width="1" height="352.5" fill="#fff" fill-opacity="0.13"/>
<rect x="1482.0" y="335.5" width="1" height="352.5" fill="#fff" fill-opacity="0.13"/>
<rect x="1528.9" y="335.5" width="1" height="352.5" fill="#fff" fill-opacity="0.13"/>
<rect x="1675.1" y="335.5" width="1" height="352.5" fill="#fff" fill-opacity="0.13"/>
<rect x="1707.5" y="335.5" width="1" height="352.5" fill="#fff" fill-opacity="0.13"/>
<rect x="1834.5" y="335.5" width="1" height="352.5" fill="#fff" fill-opacity="0.13"/>
<line x1="699" y1="688.5" x2="1876.5" y2="688.5" stroke="#000" stroke-width="1"/>
<line x1="708.5" y1="686" x2="708.5" y2="694.5" stroke="#000" stroke-width="1"/>
<text x="710.8" y="710" font-size="11" fill="#444" text-anchor="middle">00:00:00</text>
<line x1="978.5" y1="686" x2="978.5" y2="694.5" stroke="#000" stroke-width="1"/>
<text x="978.5" y="710" font-size="11" fill="#444" text-anchor="middle">00:00:01</text>
<line x1="1248.5" y1="686" x2="1248.5" y2="694.5" stroke="#000" stroke-width="1"/>
<text x="1248.5" y="710" font-size="11" fill="#444" text-anchor="middle">00:00:02</text>
<line x1="1518.5" y1="686" x2="1518.5" y2="694.5" stroke="#000" stroke-width="1"/>
<text x="1518.5" y="710" font-size="11" fill="#444" text-anchor="middle">00:00:03</text>
<line x1="1788.5" y1="686" x2="1788.5" y2="694.5" stroke="#000" stroke-width="1"/>
<text x="1788.5" y="710" font-size="11" fill="#444" text-anchor="middle">00:00:04</text>
<text x="710.8" y="724" font-size="11" fill="#444" text-anchor="middle">0 days</text>
<g fill="none" stroke="#929a9f" stroke-width="1.5" stroke-linecap="round" stroke-linejoin="round"><path d="M1684.5 320.5 H1698 M1687 318.1 l-2.6 2.4 l2.6 2.4 M1695.5 318.1 l2.6 2.4 l-2.6 2.4"/></g>
<rect x="1677" y="333" width="30" height="2" fill="#1a9fe0"/>
<g fill="none" stroke="#929a9f" stroke-width="1.3" stroke-linecap="round"><path d="M1714.8 317 v-1.5 a1.5 1.5 0 0 1 1.5 -1.5 h1.3 M1720.3 314 h2.4 M1725.3 314 h0.8 a1.5 1.5 0 0 1 1.5 1.5 v1 M1714.8 319.6 v2.4 M1714.8 324.6 v0.4 a1.5 1.5 0 0 0 1.5 1.5 h0.6"/><circle cx="1723.2" cy="322.6" r="3.4"/><path d="M1725.8 325.3 l2.6 2.6"/></g>
<line x1="1737.5" y1="315.0" x2="1737.5" y2="324.5" stroke="#cfd3d7" stroke-width="0.8"/>
<g fill="none" stroke="#929a9f" stroke-width="1.3" stroke-linecap="round"><circle cx="1750.5" cy="318.5" r="4.1"/><path d="M1748.6 318.5 h3.8 M1750.5 316.6 v3.8 M1750.5 322.6 v4.4"/></g>
<rect x="1754.6" y="320" width="5.2" height="7.2" rx="2.4" fill="#929a9f"/><rect x="1756.7" y="321.2" width="1" height="2" fill="#fafafa"/>
<line x1="1768.5" y1="315.0" x2="1768.5" y2="324.5" stroke="#cfd3d7" stroke-width="0.8"/>
<g fill="none" stroke="#929a9f" stroke-width="1.35" stroke-linecap="round" stroke-linejoin="round"><path d="M1783.2 320.6 l6.6 2.3 l-4.2 1.1 l-0.3 3.4 z"/><path d="M1782.7 315.90000000000003 v-2.6 M1779.4 317.7 l-1.7 -1.6 M1786.2 317.3 l1.6 -1.6 M1778.4 320.5 h-2.6 M1779.4 323.7 l-1.6 1.7"/></g>
<rect x="1769" y="333" width="30" height="2" fill="#1a9fe0"/>
<line x1="1799.5" y1="315.0" x2="1799.5" y2="324.5" stroke="#cfd3d7" stroke-width="0.8"/>
<g fill="none" stroke="#929a9f" stroke-width="1.3" stroke-linecap="round" stroke-linejoin="round"><path d="M1808.6 317.6 a6.4 6.4 0 1 1 -0.9 4.6"/><path d="M1808.2 314 v3.9 h3.9"/></g><circle cx="1814.3" cy="320.6" r="1" fill="#929a9f"/>
<g fill="none" stroke="#929a9f" stroke-width="1.5" stroke-linecap="round"><circle cx="1844.9" cy="320.3" r="6.5"/><path stroke-width="1.3" d="M1842.7 318.2 a2.2 2.2 0 1 1 3.5 1.8 c-0.9 0.6 -1.3 0.9 -1.3 1.9"/></g><circle cx="1844.9" cy="323.90000000000003" r="0.8" fill="#929a9f"/>
<line x1="1860.2" y1="315" x2="1860.2" y2="325" stroke="#c9ced3" stroke-width="0.7"/>
<rect x="1861.6" y="312.9" width="2" height="2" rx="0.4" fill="#929a9f"/>
<rect x="1861.6" y="317.0" width="2" height="2" rx="0.4" fill="#929a9f"/>
<rect x="1861.6" y="321.1" width="2" height="2" rx="0.4" fill="#929a9f"/>
<text x="699.7" y="758.6" font-size="13" font-weight="bold" fill="#444">Progress -- total: 77, waiting: 40, queued: 10, processing: 2, in-memory: 12, no-worker: 0, erred: 0</text>
<g fill="none" stroke="#929a9f" stroke-width="1.5" stroke-linecap="round"><circle cx="1844.9" cy="753.3" r="6.5"/><path stroke-width="1.3" d="M1842.7 751.1999999999999 a2.2 2.2 0 1 1 3.5 1.8 c-0.9 0.6 -1.3 0.9 -1.3 1.9"/></g><circle cx="1844.9" cy="756.9" r="0.8" fill="#929a9f"/>
<line x1="1860.2" y1="748" x2="1860.2" y2="758" stroke="#c9ced3" stroke-width="0.7"/>
<rect x="1861.6" y="745.9" width="2" height="2" rx="0.4" fill="#929a9f"/>
<rect x="1861.6" y="750.0" width="2" height="2" rx="0.4" fill="#929a9f"/>
<rect x="1861.6" y="754.1" width="2" height="2" rx="0.4" fill="#929a9f"/>
<defs><pattern id="hat" width="4.6" height="16" patternUnits="userSpaceOnUse" patternTransform="skewX(-24)"><rect width="4.6" height="16" fill="#fff"/><rect x="0" width="2.9" height="16" fill="#c8c8c8"/></pattern></defs>
<rect x="699.5" y="769.5" width="1176.5" height="141.5" fill="#fafafa" stroke="#e5e5e5" stroke-width="1"/>
<rect x="699.5" y="770.00" width="558.0" height="14.2" fill="#f0f0f0"/>
<rect x="699.5" y="770.00" width="27.5" height="14.2" fill="#c8c8c8"/><rect x="699.5" y="770.00" width="1" height="14.2" fill="#e0d23a"/>
<text x="704.5" y="780.90" font-size="13.2" fill="#000">and_</text>
<text x="1251.6" y="780.90" font-size="13.2" fill="#000" text-anchor="end">0 / 20</text>
<rect x="699.5" y="787.72" width="558.0" height="14.2" fill="#f0f0f0"/>
<rect x="699.5" y="787.72" width="418.0" height="14.2" fill="url(#hat)"/>
<rect x="699.5" y="787.72" width="173.5" height="14.2" fill="#c8c8c8"/>
<rect x="699.5" y="787.72" width="139.5" height="14.2" fill="#fde725"/>
<rect x="699.5" y="787.72" width="34.200000000000045" height="14.2" fill="#fbe877"/>
<text x="704.5" y="798.62" font-size="13.2" fill="#000">getitem</text>
<text x="1251.6" y="798.62" font-size="13.2" fill="#000" text-anchor="end">4 / 16</text>
<rect x="699.5" y="805.44" width="558.0" height="14.2" fill="#f0f0f0"/>
<rect x="699.5" y="805.44" width="186.39999999999998" height="14.2" fill="#addc30"/>
<text x="704.5" y="816.34" font-size="13.2" fill="#000">ge</text>
<text x="1251.6" y="816.34" font-size="13.2" fill="#000" text-anchor="end">4 / 12</text>
<rect x="699.5" y="823.16" width="558.0" height="14.2" fill="#f0f0f0"/>
<rect x="699.5" y="823.16" width="185.5" height="14.2" fill="url(#hat)"/>
<rect x="699.5" y="823.16" width="46.700000000000045" height="14.2" fill="#3e4a89"/>
<text x="704.5" y="834.06" font-size="13.2" fill="#000">le</text>
<text x="1251.6" y="834.06" font-size="13.2" fill="#000" text-anchor="end">1 / 12</text>
<rect x="699.5" y="840.88" width="558.0" height="14.2" fill="#f0f0f0"/>
<rect x="700.0" y="841.38" width="557.0" height="13.2" fill="#89d548" stroke="#89d548" stroke-width="1"/>
<text x="704.5" y="851.78" font-size="13.2" fill="#000">mask_partition</text>
<text x="1251.6" y="851.78" font-size="13.2" fill="#000" text-anchor="end">4 / 4</text>
<rect x="699.5" y="858.60" width="558.0" height="14.2" fill="#f0f0f0"/>
<rect x="700.0" y="859.10" width="557.0" height="13.2" fill="#7ea4b8" stroke="#4d7f9c" stroke-width="1"/>
<text x="704.5" y="869.50" font-size="13.2" fill="#000">generate_fak...</text>
<text x="1251.6" y="869.50" font-size="13.2" fill="#000" text-anchor="end">4 / 4</text>
<rect x="699.5" y="876.32" width="558.0" height="14.2" fill="#f0f0f0"/>
<rect x="700.0" y="876.82" width="557.0" height="13.2" fill="#9ddc9a" stroke="#7fd47b" stroke-width="1"/>
<text x="704.5" y="887.22" font-size="13.2" fill="#000">apply_fake_data</text>
<text x="1251.6" y="887.22" font-size="13.2" fill="#000" text-anchor="end">4 / 4</text>
<rect x="699.5" y="894.04" width="558.0" height="14.2" fill="#f0f0f0"/>
<rect x="700.0" y="894.54" width="557.0" height="13.2" fill="#8890b5" stroke="#5c67a0" stroke-width="1"/>
<text x="704.5" y="904.94" font-size="13.2" fill="#000">frompandas</text>
<text x="1251.6" y="904.94" font-size="13.2" fill="#000" text-anchor="end">4 / 4</text>
<rect x="1318" y="770" width="558" height="14.2" fill="#f0f0f0"/><rect x="1318" y="770" width="2" height="14.2" fill="#22a884"/>
<text x="1323.6" y="780.9" font-size="13.2" fill="#000">repartitiont...</text>
<text x="1870.6" y="780.9" font-size="13.2" fill="#000" text-anchor="end">0 / 1</text>
</svg>
</div>
</body></html>
